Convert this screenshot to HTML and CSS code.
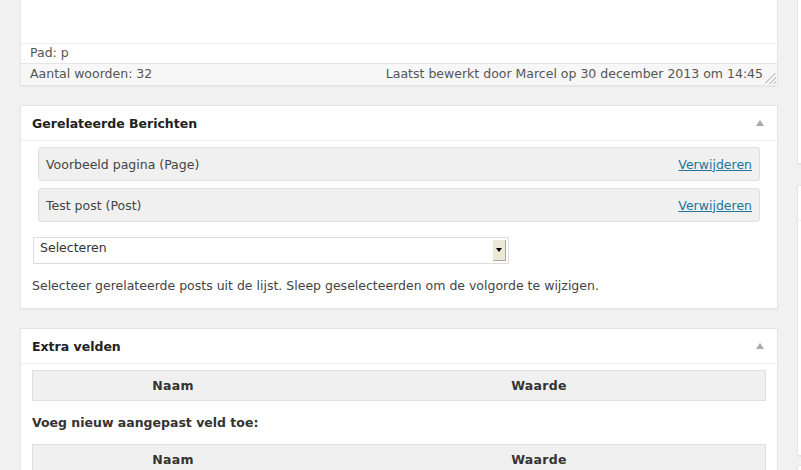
FILE: index.html
```html
<!DOCTYPE html>
<html lang="nl">
<head>
<meta charset="utf-8">
<title>Bericht bewerken</title>
<link rel="stylesheet" href="styles.css">
</head>
<body>
<div class="wrap">
  <div class="main">
    <div class="editor">
      <div class="editor-area"></div>
      <div class="path">Pad: p</div>
      <div class="status">
        <span>Aantal woorden: 32</span>
        <span class="last-edit">Laatst bewerkt door Marcel op 30 december 2013 om 14:45</span>
        <span class="resize"></span>
      </div>
    </div>

    <div class="postbox">
      <div class="hndle"><h3>Gerelateerde Berichten</h3><span class="toggle"></span></div>
      <div class="inside">
        <ul class="related">
          <li><span>Voorbeeld pagina (Page)</span><a href="#">Verwijderen</a></li>
          <li><span>Test post (Post)</span><a href="#">Verwijderen</a></li>
        </ul>
        <div class="select">
          <span>Selecteren</span>
          <span class="select-btn"><span class="caret"></span></span>
        </div>
        <p class="desc">Selecteer gerelateerde posts uit de lijst. Sleep geselecteerden om de volgorde te wijzigen.</p>
      </div>
    </div>

    <div class="postbox">
      <div class="hndle"><h3>Extra velden</h3><span class="toggle"></span></div>
      <div class="inside cf">
        <div class="table-head"><span class="col-name">Naam</span><span class="col-value">Waarde</span></div>
        <p class="add-title">Voeg nieuw aangepast veld toe:</p>
        <div class="table-head"><span class="col-name">Naam</span><span class="col-value">Waarde</span></div>
      </div>
    </div>
  </div>

  <div class="side">
    <div class="sidebox sidebox-1"></div>
    <div class="sidebox sidebox-2"><div class="side-head"></div></div>
    <div class="sidebox sidebox-3"></div>
  </div>
</div>
</body>
</html>
```

FILE: styles.css
```css
html, body {
  margin: 0;
  padding: 0;
  background: #f1f1f1;
  overflow: hidden;
}
body {
  font-family: "DejaVu Sans", Verdana, sans-serif;
  font-size: 12.5px;
  color: #444;
}
.wrap {
  display: flex;
  gap: 19px;
  padding-left: 20px;
  height: 470px;
}
.main {
  width: 758px;
  flex: none;
}
.editor {
  background: #fff;
  border: 1px solid #e5e5e5;
  border-top: none;
  box-shadow: 0 1px 1px rgba(0,0,0,.04);
}
.editor-area {
  height: 43px;
  border-bottom: 1px solid #eee;
}
.path {
  height: 19px;
  line-height: 17px;
  padding: 0 9px;
  border-bottom: 1px solid #e5e5e5;
  color: #555;
}
.status {
  position: relative;
  display: flex;
  justify-content: space-between;
  height: 21px;
  line-height: 20px;
  padding: 0 14px 0 9px;
  background: #f7f7f7;
  color: #555;
}
.resize {
  position: absolute;
  right: 1px;
  bottom: 1px;
  width: 11px;
  height: 11px;
  background: linear-gradient(135deg, transparent 45%, #ccc 45%, #ccc 52%, transparent 52%, transparent 66%, #ccc 66%, #ccc 73%, transparent 73%, transparent 86%, #ccc 86%, #ccc 93%, transparent 93%);
}
.postbox {
  margin-top: 19px;
  background: #fff;
  border: 1px solid #e5e5e5;
  box-shadow: 0 1px 1px rgba(0,0,0,.04);
}
.hndle {
  display: flex;
  align-items: center;
  justify-content: space-between;
  height: 34px;
  padding: 0 13px 0 11px;
  border-bottom: 1px solid #eee;
}
.hndle h3 {
  margin: 0;
  font-size: 12.5px;
  font-weight: bold;
  color: #222;
}
.toggle {
  width: 0;
  height: 0;
  border-left: 4px solid transparent;
  border-right: 4px solid transparent;
  border-bottom: 6px solid #aaa;
}
.inside {
  padding: 6px 11px 0;
}
.related {
  list-style: none;
  margin: 0 6px;
  padding: 0;
}
.related li {
  display: flex;
  justify-content: space-between;
  align-items: center;
  height: 32px;
  padding: 0 7px;
  margin-bottom: 7px;
  background: #f0f0f0;
  border: 1px solid #dfdfdf;
  border-radius: 3px;
}
.related li:last-child {
  margin-bottom: 15px;
}
.related a {
  color: #21759b;
  text-decoration: underline;
}
.select {
  display: flex;
  justify-content: space-between;
  align-items: flex-start;
  width: 466px;
  height: 24px;
  margin: 0 0 0 1px;
  border: 1px solid #ddd;
  background: #fff;
  padding: 1px 2px 0 6px;
}
.select span:first-child {
  line-height: 17px;
  color: #333;
}
.select-btn {
  display: flex;
  align-items: center;
  justify-content: center;
  width: 12px;
  height: 20px;
  margin-top: 1px;
  background: #ece9d8;
  border-right: 1px solid #aca899;
  border-bottom: 1px solid #aca899;
}
.caret {
  width: 0;
  height: 0;
  border-left: 3px solid transparent;
  border-right: 3px solid transparent;
  border-top: 4px solid #000;
}
.desc {
  margin: 14px 0 0;
  padding-bottom: 14px;
  line-height: 16px;
}
.table-head {
  display: flex;
  height: 29px;
  align-items: center;
  background: #f0f0f0;
  border: 1px solid #dfdfdf;
  font-weight: bold;
  color: #333;
  letter-spacing: 0.3px;
}
.col-name {
  width: 280px;
  text-align: center;
}
.col-value {
  flex: 1;
  text-align: center;
}
.add-title {
  margin: 15px 0 14px;
  font-weight: bold;
  font-size: 12.5px;
  color: #333;
  line-height: 14px;
}
.side {
  flex: none;
  width: 200px;
}
.sidebox {
  background: #fff;
  border: 1px solid #e5e5e5;
  box-shadow: 0 1px 1px rgba(0,0,0,.04);
}
.sidebox-1 {
  height: 163px;
  border-top: none;
}
.sidebox-2 {
  margin-top: 21px;
  height: 269px;
}
.side-head {
  height: 34px;
  border-bottom: 1px solid #eee;
}
.sidebox-3 {
  margin-top: 9px;
  height: 40px;
}
```
